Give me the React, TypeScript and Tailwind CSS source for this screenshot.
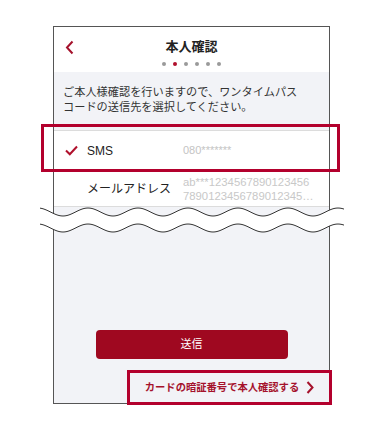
const wave = (c: number, a: number, from: number, to: number) => {
  const pts: string[] = [];
  for (let x = from; x <= to; x += 2) {
    const y = c - a * Math.cos((2 * Math.PI * (x - 48)) / 50);
    pts.push(`${x},${y.toFixed(2)}`);
  }
  return pts;
};

const top = wave(10, 4, 0, 304);
const bottom = wave(26, 4, 0, 304);
const gap = `M${top.join(" L")} L${[...bottom].reverse().join(" L")} Z`;

function WaveBreak() {
  return (
    <svg width="304" height="34" viewBox="0 0 304 34" className="absolute left-[-14px] top-[-5px]">
      <path d={gap} fill="#fff" />
      <path d={`M${top.join(" L")}`} fill="none" stroke="#333" strokeWidth="1" />
      <path d={`M${bottom.join(" L")}`} fill="none" stroke="#333" strokeWidth="1" />
    </svg>
  );
}

export default function App() {
  return (
    <div
      className="w-[380px] h-[430px] bg-white overflow-hidden text-[#333]"
      style={{ fontFamily: '"Liberation Sans", "Noto Sans CJK JP", sans-serif' }}
    >
      <div className="ml-[53px] mt-[26px] w-[277px] border border-[#555] flex flex-col">
        {/* header */}
        <div className="relative h-[45px] bg-white flex flex-col items-center pt-[12px]">
          <svg width="9" height="15" viewBox="0 0 9 15" className="absolute left-[11px] top-[13px]">
            <path d="M7.5 1.5 L2 7.5 L7.5 13.5" fill="none" stroke="#a5122c" strokeWidth="2" />
          </svg>
          <p className="text-[13px] leading-[16px] font-bold text-[#222]">本人確認</p>
          <div className="flex gap-[7px] mt-[7px]">
            {[0, 1, 2, 3, 4, 5].map((i) => (
              <span key={i} className={i === 1 ? "w-1 h-1 rounded-full bg-[#b0102c]" : "w-1 h-1 rounded-full bg-[#9a9a9a]"} />
            ))}
          </div>
        </div>

        <div className="bg-[#f2f3f7] flex flex-col">
          <p className="px-[9px] pt-[13px] text-[11.2px] leading-[15px] text-[#333]">
            ご本人様確認を行いますので、ワンタイムパス
            <br />
            コードの送信先を選択してください。
          </p>

          {/* list */}
          <div className="relative mt-[15px] bg-white border-y border-[#dcdcdc]">
            <div className="h-[40px] flex items-center border-b border-[#e2e2e2]">
              <div className="w-[33px] pl-[11px]">
                <svg width="13" height="11" viewBox="0 0 13 11">
                  <path d="M1 5.5 L4.8 9.3 L12 1.5" fill="none" stroke="#b0102c" strokeWidth="2" />
                </svg>
              </div>
              <span className="w-[96px] text-[12px] text-[#222]">SMS</span>
              <span className="text-[11px] text-[#c4c4c4]">080*******</span>
            </div>
            <div className="h-[35px] flex items-center">
              <span className="ml-[33px] w-[96px] text-[12px] text-[#222]">メールアドレス</span>
              <span className="text-[11.3px] leading-[14px] text-[#c8c8c8]">
                ab***1234567890123456
                <br />
                7890123456789012345…
              </span>
            </div>
            <div className="absolute top-[-7px] left-[-13px] w-[299px] h-[48px] border-[3px] border-[#b3002d]" />
          </div>

          <div className="relative h-0">
            <WaveBreak />
          </div>

          <button className="mt-[123px] mx-auto w-[192px] h-[29px] rounded-[4px] bg-[#9f0820] text-white text-[11px]">
            送信
          </button>

          <div className="mt-[11px] self-end -mr-[3px] -mb-[2px] w-[205px] h-[35px] border-[3px] border-[#b3002d] bg-[#f2f3f7] flex items-center justify-center gap-[7px]">
            <span className="text-[10.3px] font-bold text-[#a5122c]">カードの暗証番号で本人確認する</span>
            <svg width="8" height="13" viewBox="0 0 8 13">
              <path d="M1.5 1 L6.5 6.5 L1.5 12" fill="none" stroke="#a5122c" strokeWidth="2" />
            </svg>
          </div>
        </div>
      </div>
    </div>
  );
}
